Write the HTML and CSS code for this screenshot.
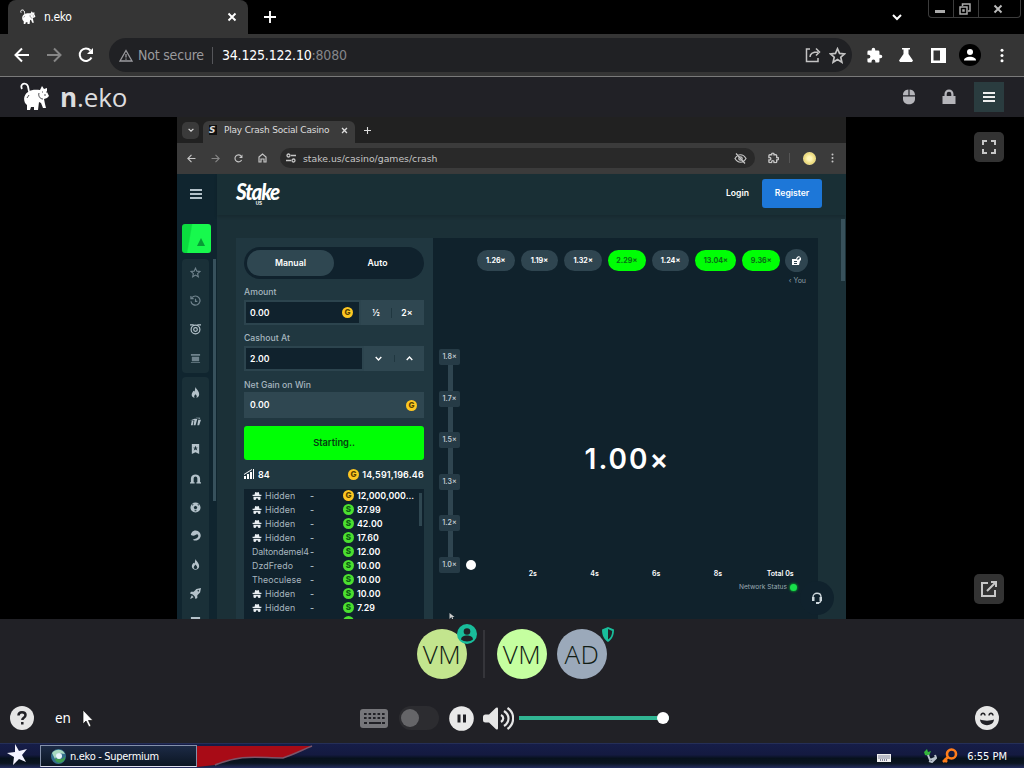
FILE: index.html
```
<!DOCTYPE html>
<html lang="en">
<head>
  <meta charset="utf-8">
  <title>n.eko</title>
  <link rel="stylesheet" href="styles.css">
</head>
<body>
  <svg class="sprite" width="0" height="0">
    <symbol id="cat" viewBox="0 0 30 30">
      <path d="M2 7C0 3 3 1 6 2c4 2 1 6 4 9" fill="none" stroke="currentColor" stroke-width="1.800"/>
      <path d="M8 10c4-3 9-2 12-2l2-4 2 3 3-1 0 4 2 4-2 2-3 1 1 5 1 4h-3l-2-5-2-1-1 8h-4l0-3h-3l-1 3H7l0-5C3 20 3 13 8 10z" fill="currentColor"/>
      <path d="M19 11c-1 3 1 6 4 6M9 13l-2 3M22 10h1M26 10h1M24 13h2" fill="none" stroke="#212126" stroke-width=".8"/>
    </symbol>
    <symbol id="close" viewBox="0 0 10 10"><path d="M1.500 1.500l7 7M8.500 1.500l-7 7" fill="none" stroke="currentColor" stroke-width="1.900"/></symbol>
    <symbol id="plus" viewBox="0 0 12 12"><path d="M6 0v12M0 6h12" stroke="currentColor" stroke-width="1.900"/></symbol>
    <symbol id="chevron" viewBox="0 0 10 10"><path d="M1 3l4 4 4-4" fill="none" stroke="currentColor" stroke-width="2"/></symbol>
    <symbol id="back" viewBox="0 0 16 16"><path d="M15 8H2M8 1.500L1.500 8 8 14.500" fill="none" stroke="currentColor" stroke-width="2"/></symbol>
    <symbol id="reload" viewBox="0 0 16 16"><path d="M13.500 10.500A6.200 6.200 0 1 1 12.500 3.500" fill="none" stroke="currentColor" stroke-width="2"/><path d="M15 1v6H9z" fill="currentColor"/></symbol>
    <symbol id="dots" viewBox="0 0 4 16"><circle cx="2" cy="2.300" r="1.600"/><circle cx="2" cy="8" r="1.600"/><circle cx="2" cy="13.700" r="1.600"/></symbol>
    <symbol id="puzzle" viewBox="0 0 24 24"><path d="M20.500 11H19V7a2 2 0 0 0-2-2h-4V3.500a2.500 2.500 0 0 0-5 0V5H4a2 2 0 0 0-2 2v3.800h1.500a2.700 2.700 0 0 1 0 5.400H2V20a2 2 0 0 0 2 2h3.800v-1.500a2.700 2.700 0 0 1 5.400 0V22H17a2 2 0 0 0 2-2v-4h1.500a2.500 2.500 0 0 0 0-5z"/></symbol>
    <symbol id="star" viewBox="0 0 24 24"><path d="M12 2.500l2.900 6.500 7 .7-5.300 4.700 1.600 7-6.200-3.700-6.200 3.700 1.600-7L2.100 9.700l7-.7z" fill="none" stroke="currentColor" stroke-width="2.400"/></symbol>
    <symbol id="menu" viewBox="0 0 12 12"><path d="M0 2h12M0 6h12M0 10h12" stroke="currentColor" stroke-width="2"/></symbol>
    <symbol id="spy" viewBox="0 0 10 9"><path d="M3 0l2 .5L7 0l.8 3H10v1.400H0V3h2.200zM1 5.300h8v2.200a1.500 1.500 0 0 1-3 0L5.500 7h-1L4 7.500a1.500 1.500 0 0 1-3 0z" fill="#e8eef2"/></symbol>
  </svg>

  <div class="tabstrip">
    <div class="tab">
      <svg class="tab-icon"><use href="#cat"/></svg>
      <span>n.eko</span>
      <svg class="tab-close"><use href="#close"/></svg>
    </div>
    <svg class="new-tab"><use href="#plus"/></svg>
    <svg class="tab-search"><use href="#chevron"/></svg>
    <div class="window-buttons">
      <span class="wb"><svg width="12" height="12"><path d="M1 7h10v3H1z" fill="#aaa"/></svg></span>
      <span class="wb"><svg width="12" height="12" fill="none" stroke="#aaa" stroke-width="1.500"><path d="M3.500 3V1h7.500v7H9"/><path d="M1 4h7v7H1zM4 7h1v1H4z"/></svg></span>
      <span class="wb wide"><svg width="10" height="10"><use href="#close"/></svg></span>
    </div>
  </div>

  <div class="toolbar">
    <svg class="nav"><use href="#back"/></svg>
    <svg class="nav forward"><use href="#back"/></svg>
    <svg class="nav"><use href="#reload"/></svg>
    <div class="omnibox">
      <svg class="warn" viewBox="0 0 14 13"><path d="M7 1.500L13 12H1zM7 5v3.500M7 9.500v1.300" fill="none" stroke="currentColor" stroke-width="1.300"/></svg>
      <span class="not-secure">Not secure</span>
      <span class="sep"></span>
      <span class="url">34.125.122.10<span class="port">:8080</span></span>
      <svg class="share" viewBox="0 0 16 16" fill="none" stroke="currentColor" stroke-width="1.500"><path d="M5 2H1.500v12.500H13V11M5 10c0-4 3-5 8-5M11 1.500L14.500 5 11 8.500"/></svg>
      <svg class="bookmark"><use href="#star"/></svg>
    </div>
    <div class="actions">
      <span><svg width="17" height="17"><use href="#puzzle"/></svg></span>
      <span><svg width="16" height="16" viewBox="0 0 16 16"><path d="M4 1h8v1.500h-1.500V7L15 13.500 14 15H2l-1-1.500L5.500 7V2.500H4z"/></svg></span>
      <span><svg width="15" height="15" viewBox="0 0 15 15"><path fill-rule="evenodd" d="M0 0h15v15H0zM2.500 2.500h6.500v10H2.500z"/></svg></span>
      <span><i class="profile"><svg width="14" height="14" viewBox="0 0 14 14"><circle cx="7" cy="4" r="3"/><path d="M1 12.500c0-5 12-5 12 0z"/></svg></i></span>
      <span><svg width="4" height="15"><use href="#dots"/></svg></span>
    </div>
  </div>

  <div class="neko-header">
    <svg class="neko-logo"><use href="#cat"/></svg>
    <div class="neko-name"><b>n</b>.eko</div>
    <div class="neko-menu">
      <span class="hbtn"><svg width="14" height="16" viewBox="0 0 14 16"><path d="M6.400.5v5.800H1C1 3 3 .8 6.400.5zM7.600.5C11 .8 13 3 13 6.300H7.600zM1 7.500h12V10c0 7-12 7-12 0z"/></svg></span>
      <span class="hbtn"><svg width="14" height="16" viewBox="0 0 14 16"><path fill-rule="evenodd" d="M.5 7h2V5a4.500 4.500 0 0 1 9 0v2h2v8H.5zM4.700 7h4.600V5a2.300 2.300 0 0 0-4.600 0z"/></svg></span>
      <span class="hbtn open"><svg width="12" height="12"><use href="#menu"/></svg></span>
    </div>
  </div>

  <div class="video">
    <div class="stream">
      <div class="s-tabs">
        <span class="s-search"><svg width="6" height="6"><use href="#chevron"/></svg></span>
        <div class="s-tab">
          <span class="s-fav">S</span>
          <span>Play Crash Social Casino</span>
          <svg width="7" height="7"><use href="#close"/></svg>
        </div>
        <svg width="7" height="7"><use href="#plus"/></svg>
      </div>
      <div class="s-toolbar">
        <svg width="9" height="9"><use href="#back"/></svg>
        <svg width="9" height="9" class="forward"><use href="#back"/></svg>
        <svg width="9" height="9"><use href="#reload"/></svg>
        <svg width="9" height="10" viewBox="0 0 9 10" fill="none" stroke="currentColor" stroke-width="1.200"><path d="M1 4l3.500-3L8 4v5H6V6H3v3H1z"/></svg>
        <div class="s-omnibox">
          <svg width="10" height="10" viewBox="0 0 10 10" fill="none" stroke="currentColor" stroke-width="1.300"><circle cx="2.500" cy="2.500" r="1.500"/><path d="M5 2.500h5M0 7.500h5"/><circle cx="7.500" cy="7.500" r="1.500"/></svg>
          <span>stake.us/casino/games/crash</span>
          <svg class="eye" width="13" height="11" viewBox="0 0 13 11" fill="none" stroke="currentColor" stroke-width="1.200"><path d="M1 5.500c3-5 8-5 11 0-3 5-8 5-11 0zM2 .5l9 10"/><circle cx="6.500" cy="5.500" r="1.700"/></svg>
        </div>
        <svg class="s-ext" width="11" height="12" viewBox="0 0 24 24" fill="none" stroke="currentColor" stroke-width="3"><use href="#puzzle"/></svg>
        <span class="s-line"></span>
        <span class="s-avatar"></span>
        <svg width="3" height="10" class="s-dots"><use href="#dots"/></svg>
      </div>

      <div class="stake">
        <div class="side">
          <svg class="burger" width="12" height="12"><use href="#menu"/></svg>
          <div class="promo"><svg width="8" height="8" viewBox="0 0 8 8"><path d="M4 0l4 8H0z" fill="#079b35"/></svg></div>
          <div class="side-body">
            <div class="side-card">
              <svg class="dim"><use href="#star"/></svg>
              <svg class="dim" viewBox="0 0 12 12" fill="none" stroke="currentColor" stroke-width="1.300"><path d="M2 3a5 5 0 1 1-1 4M1 1v3h3M6 4v3h2"/></svg>
              <svg viewBox="0 0 12 12" fill="none" stroke="currentColor" stroke-width="1.300"><circle cx="6" cy="6" r="4.800"/><circle cx="6" cy="6" r="2"/><path d="M0 1h4M8 1h4"/></svg>
              <svg class="dim" viewBox="0 0 12 12"><path d="M1 1h10v2H1zM2 4h8v5H2zM1 10h10v1H1z"/></svg>
            </div>
            <div class="side-card grow">
              <svg viewBox="0 0 12 12"><path d="M6 0c1 3 4 4 4 8 0 2-1 3-3 4 1-2 0-3-1-4-1 1-2 2-1 4-5-2-3-6-1-8l1 1z"/></svg>
              <svg viewBox="0 0 12 12"><path d="M2 5h2L3 10H1zM5 3h3L6 10H4zM9 4h3l-2 6H8zM0 5l5-2v1zM6 2h5v1z"/></svg>
              <svg viewBox="0 0 12 12"><path fill-rule="evenodd" d="M2 0h8v11L6 9l-4 2zM6 2L5 4H3l2 1-1 2 2-1 2 1-1-2 2-1H7z"/></svg>
              <svg viewBox="0 0 12 12"><path d="M1 11V6C1 0 11 0 11 6v5H8V6c0-3-4-3-4 0v5z"/><path d="M0 10h5v1.500H0zM7 10h5v1.500H7z"/></svg>
              <svg viewBox="0 0 12 12"><path fill-rule="evenodd" d="M6 .5a5.500 5.500 0 1 1 0 11 5.500 5.500 0 0 1 0-11zM6 4L4 5.500 5 8h2l1-2.500zM2 3l1 1 1-2zM8 2l1 2 1-1zM5 10h2V9H5z"/></svg>
              <svg viewBox="0 0 12 12"><path fill-rule="evenodd" d="M6 .5a5.500 5.500 0 1 1-3 10l3-1c3-1 4-4 2-5-2 0-3 3-7 1C1 3 3 .5 6 .5z"/></svg>
              <svg viewBox="0 0 12 12"><path fill-rule="evenodd" d="M6 0c1 3 4 4 4 8 0 5-8 5-8 0 0-2 1-3 2-4l1 1zM6 6c-3 3-2 5 0 5s3-2 0-5z"/></svg>
              <svg viewBox="0 0 12 12"><path fill-rule="evenodd" d="M12 0L11 5 8 8v3l-2 1-1-3-2-2-3-1 1-2h3l3-3zM8 3l1 1 1-1-1-1zM2 8l2 2-4 2z"/></svg>
              <svg viewBox="0 0 12 12"><path d="M1 0h10v8H1z"/></svg>
            </div>
          </div>
        </div>

        <div class="site">
          <div class="site-header">
            <div class="logo"><span>Stake</span><small>US</small></div>
            <span class="login">Login</span>
            <span class="register">Register</span>
          </div>
          <div class="game">
            <div class="bet">
              <div class="mode"><span class="on">Manual</span><span>Auto</span></div>
              <label>Amount</label>
              <div class="field">
                <div class="value">0.00<i class="coin">G</i></div>
                <div class="pair amount"><span>½</span><span>2×</span></div>
              </div>
              <label class="l2">Cashout At</label>
              <div class="field">
                <div class="value">2.00</div>
                <div class="pair"><span><svg width="7" height="7"><use href="#chevron"/></svg></span><span><svg class="up" width="7" height="7"><use href="#chevron"/></svg></span></div>
              </div>
              <label class="l3">Net Gain on Win</label>
              <div class="gain">0.00<i class="coin">G</i></div>
              <div class="start">Starting..</div>
              <div class="totals">
                <svg width="10" height="10" viewBox="0 0 10 10" fill="#b1bad3"><path d="M0 7h2v3H0zM3 5h2v5H3zM6 3h2v7H6zM9 0h1v10H9zM0 5l8-5v1L0 6z"/></svg>
                <span>84</span>
                <span class="sum"><i class="coin">G</i>14,591,196.46</span>
              </div>
              <div class="players">
                <div class="p"><span><svg><use href="#spy"/></svg>Hidden</span><em>-</em><b><i class="coin">G</i>12,000,000...</b></div>
                <div class="p"><span><svg><use href="#spy"/></svg>Hidden</span><em>-</em><b><i class="coin s">S</i>87.99</b></div>
                <div class="p"><span><svg><use href="#spy"/></svg>Hidden</span><em>-</em><b><i class="coin s">S</i>42.00</b></div>
                <div class="p"><span><svg><use href="#spy"/></svg>Hidden</span><em>-</em><b><i class="coin s">S</i>17.60</b></div>
                <div class="p"><span class="long">Daltondemel4</span><em>-</em><b><i class="coin s">S</i>12.00</b></div>
                <div class="p"><span>DzdFredo</span><em>-</em><b><i class="coin s">S</i>10.00</b></div>
                <div class="p"><span>Theoculese</span><em>-</em><b><i class="coin s">S</i>10.00</b></div>
                <div class="p"><span><svg><use href="#spy"/></svg>Hidden</span><em>-</em><b><i class="coin s">S</i>10.00</b></div>
                <div class="p"><span><svg><use href="#spy"/></svg>Hidden</span><em>-</em><b><i class="coin s">S</i>7.29</b></div>
                <div class="p"><span></span><em></em><b><i class="coin s"></i></b></div>
              </div>
            </div>

            <div class="crash">
              <div class="past">
                <span>1.26×</span><span>1.19×</span><span>1.32×</span><span class="win">2.29×</span><span>1.24×</span><span class="win w41">13.04×</span><span class="win">9.36×</span>
                <span class="stats"><svg width="9" height="9" viewBox="0 0 9 9"><path fill-rule="evenodd" d="M0 3h4l1-2 2-1 2 2v2L8 5 7 9H0zM5 3l1 1 2-2-1-1zM2 5v1h3V5zM2 7v1h3V7z" fill="#fff"/></svg></span>
              </div>
              <div class="you">‹ You</div>
              <div class="chart">
                <div class="y-axis"><span>1.8×</span><span>1.7×</span><span>1.5×</span><span>1.3×</span><span>1.2×</span><span>1.0×</span></div>
                <div class="ball"></div>
                <div class="multiplier">1.00×</div>
              </div>
              <div class="x-axis"><span>2s</span><span>4s</span><span>6s</span><span>8s</span><span class="total">Total 0s</span></div>
              <div class="network">Network Status<i></i></div>
            </div>
          </div>
          <div class="support"><svg width="12" height="13" viewBox="0 0 12 13"><path d="M2 8V5c0-5 8-5 8 0v3c0 2-1 3-4 3" fill="none" stroke="#cdd7dc" stroke-width="1.300"/><path d="M1 5h2.500v4H1zM8.500 5H11v4H8.500zM5 10h3v2H5z" fill="#cdd7dc"/></svg></div>
        </div>
      </div>
      <div class="page-scroll"></div>
      <svg class="remote-cursor" width="6" height="8" viewBox="0 0 6 8"><path d="M.5 0v6l2-2 1 4 1-1-1-3h2z" fill="#ccc"/></svg>
    </div>

    <div class="video-buttons">
      <span class="vbtn"><svg width="16" height="16" viewBox="0 0 16 16" fill="none" stroke="#c8c8c8" stroke-width="2"><path d="M2 6V2h4M10 2h4v4M14 10v4h-4M6 14H2v-4"/></svg></span>
      <span class="vbtn"><svg width="18" height="18" viewBox="0 0 18 18" fill="none" stroke="#c8c8c8" stroke-width="2"><path d="M8 3H2v13h13v-6M7 11l9-9M11 2h5v5"/></svg></span>
    </div>
  </div>

  <div class="members">
    <div class="member host">VM<span class="badge"><svg width="20" height="20" viewBox="0 0 20 20"><circle cx="10" cy="10" r="10" fill="#19bd9b"/><circle cx="10" cy="7.500" r="3.300" fill="#212126"/><path d="M4 15.500c0-5.500 12-5.500 12 0-3 2.500-9 2.500-12 0z" fill="#212126"/></svg></span></div>
    <span class="divider"></span>
    <div class="member">VM</div>
    <div class="member admin">AD<span class="shield"><svg width="14" height="15" viewBox="0 0 14 15"><path fill-rule="evenodd" d="M7 0l6 2.500c0 6-2 10-6 12.500-4-2.500-6-6.500-6-12.500zM7 2v10.500c3-2 4-4.500 4.200-8.500z" fill="#19bd9b"/></svg></span></div>
  </div>

  <div class="controls">
    <div class="left">
      <svg width="24" height="24" viewBox="0 0 24 24"><circle cx="12" cy="12" r="12" fill="#e6e6e6"/><path d="M8.500 9.500c0-4.500 7-4 7-.5 0 3-3.200 2.500-3.200 5M12.300 16v2.500" fill="none" stroke="#212126" stroke-width="2.500"/></svg>
      <span class="lang">en</span>
      <svg class="cursor" width="12" height="19" viewBox="0 0 12 19"><path d="M1 1v14l3-3 3 6 2-1-2.500-5.500H11z" fill="#fff" stroke="#111" stroke-width=".7"/></svg>
    </div>
    <div class="center">
      <svg class="keyboard" width="28" height="19" viewBox="0 0 28 19"><rect width="28" height="19" rx="3" fill="#76767a"/><path d="M4 5h21M4 9h21" stroke="#212126" stroke-width="2.200" stroke-dasharray="2.600 1.900"/><path d="M4 14h3M9 14h12M22 14h3" stroke="#212126" stroke-width="2.200"/></svg>
      <span class="switch"></span>
      <svg class="pause" width="25" height="25" viewBox="0 0 25 25"><circle cx="12.500" cy="12.500" r="12.300" fill="#e9e9e9"/><path d="M8.500 8.500h3v8h-3zM14 8.500h3v8h-3z" fill="#212126"/></svg>
      <svg class="volume" width="31" height="23" viewBox="0 0 31 23"><path d="M0 10q0-2.500 2.500-2.500H6L13 .8q2-1 2 1v19.400q0 2-2 1L6 15.500H2.500Q0 15.500 0 13z" fill="#e6e6e6"/><path d="M18 8c3 1.500 3 5 0 7M21 4c6 4 6 11 0 15M24.500 1c7.500 5 7.500 15.500 0 21" fill="none" stroke="#e6e6e6" stroke-width="2.200"/></svg>
      <div class="slider"><span class="knob"></span></div>
    </div>
    <svg class="emoji" width="24" height="24" viewBox="0 0 24 24"><circle cx="12" cy="12" r="12" fill="#e6e6e6"/><path d="M6 9.500c.5-3 3.500-3 4 0M14 9.500c.5-3 3.500-3 4 0" fill="none" stroke="#212126" stroke-width="1.500"/><path d="M5 13.500c4 1.500 10 1.500 14 0-.5 7.500-13.500 7.500-14 0z" fill="#212126"/></svg>
  </div>

  <div class="taskbar">
    <svg class="startmenu" width="21" height="22" viewBox="0 0 21 22"><path d="M8 0l4 7 8-2-5 6 4 7-7-3-6 6 1-8-7-4 8-1z" fill="#f4f4ff"/></svg>
    <div class="task">
      <svg width="15" height="15" viewBox="0 0 15 15"><circle cx="7.500" cy="7.500" r="7.500" fill="#356f8d"/><path d="M1 4c4-5 11-4 13 1L7 4l-3 6z" fill="#a9d9c0"/><path d="M4 10c0 4 7 6 10 0V7c-1 3-4 4-7 2z" fill="#3f9d50"/><circle cx="8" cy="7" r="3" fill="#e8f4fa"/></svg>
      <span>n.eko - Supermium</span>
    </div>
    <svg class="ribbon" width="120" height="22" viewBox="0 0 120 22"><path d="M0 1h115C105 5 98 9 86 13 60 13 45 9 18 20L0 22z" fill="#a80b16"/><path d="M115 1C105 5 98 9 86 13 60 13 45 9 18 20" fill="none" stroke="#7c5468" stroke-width="1.500"/></svg>
    <div class="tray">
      <svg class="kb" width="14" height="8" viewBox="0 0 14 8"><path d="M0 0h14v8H0z" fill="#f0f0f0"/><path d="M1.500 2h11M1.500 4h11M3 6h8" stroke="#1a2048" stroke-dasharray="1 1"/></svg>
      <svg class="usb" width="14" height="14" viewBox="0 0 14 14"><path d="M1 3l3-3 1 3 3-1-2 5-4-1z" fill="#35b53c"/><path d="M5 6l2 5 5-2M12 6l1 3-4 4-3-1" fill="none" stroke="#b9c2cc" stroke-width="2"/></svg>
      <svg class="find" width="16" height="16" viewBox="0 0 16 16" fill="none" stroke="#ff7d1a"><circle cx="9.500" cy="6" r="4.500" stroke-width="2.600"/><path d="M6 9l-5 5M2 11l3 3" stroke-width="2.600"/></svg>
      <span>6:55 PM</span>
    </div>
  </div>
</body>
</html>
```
FILE: styles.css
```
* {
  box-sizing: border-box;
}

body {
  margin: 0;
  width: 1024px;
  height: 768px;
  overflow: hidden;
  display: flex;
  flex-direction: column;
  background: #212126;
  color: #fff;
  font-family: "DejaVu Sans Condensed", "DejaVu Sans", sans-serif;
  font-stretch: condensed;
}

svg {
  display: block;
  flex: none;
  fill: currentColor;
}

svg[fill="none"] {
  fill: none;
}

.sprite {
  position: absolute;
}

/* outer browser */
.tabstrip {
  height: 34px;
  flex: none;
  display: flex;
  background: #000;
  padding-left: 8px;
}

.tab {
  width: 240px;
  display: flex;
  align-items: center;
  padding: 0 11px 0 12px;
  background: #353535;
  border-radius: 8px 8px 0 0;
  font-size: 12px;
  letter-spacing: -.4px;
}

.tab-icon {
  width: 16px;
  height: 16px;
  margin-right: 8px;
}

.tab-close {
  width: 10px;
  height: 10px;
  margin-left: auto;
}

.new-tab {
  width: 12px;
  height: 12px;
  margin: 11px 0 0 16px;
}

.tab-search {
  width: 10px;
  height: 10px;
  margin: 12px 26px 0 auto;
}

.window-buttons {
  display: flex;
  width: 93px;
  height: 18px;
  margin-right: 3px;
  border: 1px solid #3c3c3c;
  border-top: none;
  border-radius: 0 0 4px 4px;
  color: #bbb;
}

.wb {
  width: 25px;
  display: flex;
  align-items: center;
  justify-content: center;
  padding-right: 3px;
  border-right: 1px solid #3c3c3c;
}

.wb.wide {
  flex: 1;
  border: none;
}

.toolbar {
  height: 43px;
  flex: none;
  display: flex;
  align-items: center;
  padding-left: 14px;
  background: #353535;
  border-bottom: 1px solid #7a7a7a;
}

.nav {
  width: 16px;
  height: 16px;
  margin-right: 16px;
}

.forward {
  transform: scaleX(-1);
  color: #868686;
}

.omnibox {
  width: 743px;
  height: 34px;
  margin-left: -1px;
  display: flex;
  align-items: center;
  padding: 0 6px 0 10px;
  border-radius: 17px;
  background: #202124;
  color: #9a9a9e;
  font-size: 14px;
}

.warn {
  width: 14px;
  height: 13px;
  margin-right: 5px;
}

.not-secure {
  width: 66px;
  white-space: nowrap;
  letter-spacing: -.2px;
}

.sep {
  width: 1px;
  height: 17px;
  margin: 0 9px 0 8px;
  background: #55565a;
}

.url {
  color: #fff;
  letter-spacing: -.2px;
}

.port {
  color: #85868a;
}

.share {
  width: 16px;
  height: 16px;
  margin-left: auto;
  margin-right: 8px;
}

.bookmark {
  width: 17px;
  height: 17px;
}

.omnibox .share, .omnibox .bookmark {
  color: #c4c4c4;
}

.actions {
  display: flex;
  padding-left: 6px;
}

.actions span {
  width: 32px;
  height: 22px;
  display: flex;
  align-items: center;
  justify-content: center;
}

.profile {
  width: 22px;
  height: 22px;
  display: flex;
  align-items: center;
  justify-content: center;
  border-radius: 50%;
  background: #000;
}

/* n.eko header */
.neko-header {
  height: 40px;
  flex: none;
  display: flex;
  align-items: center;
  padding: 0 20px;
  color: #dcdcde;
}

.neko-logo {
  width: 30px;
  height: 30px;
  color: #fff;
}

.neko-name {
  margin-left: 10px;
  font: 26px/30px "Open Sans", "Noto Sans", sans-serif;
  letter-spacing: -.1px;
}

.neko-menu {
  display: flex;
  gap: 10px;
  margin-left: auto;
  color: #b5b5ba;
}

.hbtn {
  width: 30px;
  height: 30px;
  display: flex;
  align-items: center;
  justify-content: center;
}

.hbtn.open {
  background: #2a3c3f;
  color: #eee;
}

/* video area */
.video {
  height: 502px;
  flex: none;
  display: flex;
  justify-content: space-between;
  padding: 0 20px 0 177px;
  background: #000;
}

.stream {
  position: relative;
  width: 669px;
  height: 502px;
  display: flex;
  flex-direction: column;
  overflow: hidden;
  background: #1b3037;
  font-family: "DejaVu Sans", sans-serif;
  font-stretch: normal;
}

.s-tabs {
  height: 26px;
  flex: none;
  display: flex;
  align-items: center;
  padding-left: 5px;
  background: #212121;
  color: #ddd;
  font-size: 9px;
}

.s-search {
  width: 17px;
  height: 17px;
  display: flex;
  align-items: center;
  justify-content: center;
  border-radius: 5px;
  background: #3a3a3a;
}

.s-tab {
  width: 152px;
  height: 22px;
  display: flex;
  align-items: center;
  margin: 4px 9px 0 4px;
  padding: 0 7px 4px 6px;
  border-radius: 6px 6px 0 0;
  background: #3b3b3b;
  white-space: nowrap;
  letter-spacing: -.2px;
}

.s-tab svg {
  margin-left: auto;
}

.s-fav {
  width: 8px;
  margin-right: 7px;
  background: #111;
  font-weight: bold;
  font-style: italic;
}

.s-toolbar {
  height: 31px;
  flex: none;
  display: flex;
  align-items: center;
  gap: 14.500px;
  padding: 0 0 1px 10px;
  background: #3b3b3b;
  color: #c6c6c6;
  font-size: 9.300px;
}

.s-omnibox {
  width: 475px;
  height: 20px;
  display: flex;
  align-items: center;
  gap: 7px;
  margin-left: -1px;
  padding: 0 8px 0 6px;
  border-radius: 10px;
  background: #292929;
}

.eye {
  margin-left: auto;
}

.s-ext {
  margin-left: -2px;
}

.s-line {
  width: 1px;
  height: 10px;
  margin-left: -4px;
  background: #555;
}

.s-avatar {
  width: 13px;
  height: 13px;
  margin-left: -2px;
  border-radius: 50%;
  background: radial-gradient(#fff6b8 20%, #ead879 60%, #fff);
}

.s-dots {
  margin-left: 1px;
}

.stake {
  flex: 1;
  display: flex;
  min-height: 0;
  font-family: Inter, "Noto Sans", sans-serif;
}

/* stake sidebar */
.side {
  width: 40px;
  padding-left: 5px;
  background: #10252f;
  color: #b4c2ca;
}

.burger {
  margin: 14px 0 24px 8px;
}

.promo {
  width: 29px;
  height: 29px;
  padding: 14px 0 0 15px;
  border-radius: 3px;
  background: linear-gradient(100deg, #0bdc3f 28%, #17f94d 32%);
}

.side-body {
  width: 34px;
  height: 367px;
  margin-top: 6px;
  border-right: 3px solid transparent;
  border-image: linear-gradient(#37515c 0 242px, transparent 242px) 1;
  border-width: 0 3px 0 0;
}

.side-card {
  width: 27px;
  height: 114px;
  padding: 7.500px 0 0 8px;
  border-radius: 4px;
  background: #1a3038;
}

.side-card svg {
  width: 11px;
  height: 11px;
  margin-bottom: 17.700px;
}

.side-card.grow {
  height: 249px;
  margin-top: 4px;
  padding-top: 10px;
}

.side .dim {
  color: #6f828c;
}

/* stake page */
.site {
  flex: 1;
  position: relative;
}

.site-header {
  height: 41px;
  display: flex;
  align-items: center;
  padding: 0 24px 3px 19px;
  background: #192f35;
  box-shadow: 0 2px 3px rgba(0, 0, 0, .15);
  font-size: 8.600px;
  font-weight: 600;
}

.logo {
  display: flex;
  flex-direction: column;
  font: italic 900 23px/22px Lato, sans-serif;
  letter-spacing: -1.300px;
  transform: scaleX(.9);
  transform-origin: left;
}

.logo small {
  margin: -1px 0 0 22px;
  font: 700 5px/5px "Liberation Sans", sans-serif;
  letter-spacing: 0;
}

.login {
  margin-left: auto;
}

.register {
  width: 60px;
  margin-left: 13px;
  line-height: 29px;
  text-align: center;
  border-radius: 3px;
  background: #1d77d8;
}

.game {
  display: flex;
  width: 582px;
  height: 382px;
  margin: 23px 0 0 19px;
  background: #10222c;
}

.bet {
  width: 197px;
  padding: 9px 9px 0 8px;
  background: #203740;
  color: #fff;
  font-size: 8.700px;
  font-weight: 600;
}

.mode {
  display: flex;
  height: 32px;
  padding: 3px;
  border-radius: 16px;
  background: #10222d;
}

.mode span {
  flex: 1;
  line-height: 26px;
  text-align: center;
  border-radius: 13px;
}

.mode .on {
  background: #2f4751;
}

.bet label {
  display: block;
  height: 21px;
  padding-top: 7px;
  line-height: 12px;
  font-weight: 500;
  color: #a7b6bf;
}

.bet .l3 {
  padding-top: 8px;
}

.field {
  display: flex;
  height: 25px;
  background: #2f4751;
}

.value {
  flex: 1;
  display: flex;
  align-items: center;
  justify-content: space-between;
  padding: 0 6px 0 4px;
  border: 2px solid #2c444e;
  background: #10222d;
}

.pair {
  width: 60px;
  display: flex;
  align-items: center;
}

.pair.amount {
  width: 63px;
  padding-right: 2px;
}

.pair span {
  flex: 1;
  display: flex;
  justify-content: center;
}

.pair span + span {
  border-left: 1px solid #203740;
}

.up {
  transform: scaleY(-1);
}

.coin {
  width: 11px;
  height: 11px;
  flex: none;
  display: inline-block;
  border-radius: 50%;
  background: #fdc722;
  color: #5a4200;
  font-size: 8px;
  font-weight: 800;
  font-style: normal;
  line-height: 11px;
  text-align: center;
}

.coin.s {
  background: #4be030;
  color: #0b5c10;
}

.gain {
  display: flex;
  align-items: center;
  justify-content: space-between;
  height: 26px;
  padding: 0 7px 0 6px;
  background: #2f4751;
}

.start {
  height: 34px;
  margin-top: 8px;
  border-radius: 3px;
  background: #00ff05;
  color: #063c12;
  font-size: 9.300px;
  line-height: 33px;
  text-align: center;
}

.totals {
  height: 29px;
  display: flex;
  align-items: center;
  gap: 4px;
  padding-bottom: 1px;
  font-size: 9px;
}

.sum {
  display: flex;
  align-items: center;
  gap: 3px;
  margin-left: auto;
  letter-spacing: .2px;
}

.players {
  height: 131px;
  overflow: hidden;
  background: #10222d linear-gradient(#2f4751, #2f4751) 175px 4px / 3px 33px no-repeat;
}

.p {
  height: 14px;
  display: flex;
  align-items: center;
  padding: 0 0 1px 8px;
  font-size: 8.800px;
}

.p span {
  width: 58px;
  display: flex;
  align-items: center;
  font-weight: 400;
  color: #a7b6bf;
  letter-spacing: .1px;
}

.p .long {
  letter-spacing: -.1px;
}

.p svg {
  width: 10px;
  height: 8px;
  margin-right: 3px;
}

.p em {
  width: 33px;
  color: #a7b6bf;
  font-style: normal;
}

.p b {
  display: flex;
  align-items: center;
  gap: 3px;
  font-weight: 600;
}

/* crash chart */
.crash {
  flex: 1;
  display: flex;
  flex-direction: column;
  padding: 12px 10px 0 6px;
}

.past {
  display: flex;
  gap: 6px;
  justify-content: flex-end;
  font-size: 7.200px;
  font-weight: 700;
}

.past span {
  width: 37.700px;
  height: 21px;
  line-height: 21px;
  text-align: center;
  border-radius: 11px;
  background: #2f4550;
}

.past .win {
  background: #00ff05;
  color: #0b6a17;
}

.past .w41 {
  width: 41px;
}

.past .stats {
  width: 23px;
  height: 23px;
  margin: -1px 0 -1px -1px;
  display: flex;
  align-items: center;
  justify-content: center;
  border-radius: 50%;
}

.you {
  height: 20px;
  padding: 5px 2px 0 0;
  font-size: 7px;
  text-align: right;
  color: #8c9da7;
}

.chart {
  flex: none;
  display: flex;
  height: 224px;
  margin-top: 58px;
}

.y-axis {
  width: 21px;
  display: flex;
  flex-direction: column;
  justify-content: space-between;
  background: linear-gradient(#2f4550, #2f4550) 9px 0 / 5px 100% no-repeat;
  color: #c0cad0;
  font-size: 7px;
  font-weight: 600;
}

.y-axis span {
  height: 16px;
  line-height: 16px;
  text-align: center;
  border-radius: 2px;
  background: #263b46;
}

.ball {
  width: 10px;
  height: 10px;
  margin: auto 0 3px 6px;
  border-radius: 50%;
  background: #fff;
}

.multiplier {
  width: 303px;
  margin-top: 93px;
  font-size: 28px;
  font-weight: 600;
  line-height: 34px;
  text-align: center;
  letter-spacing: 2px;
}

.x-axis {
  display: flex;
  padding-left: 63px;
  line-height: 10px;
  font-size: 7px;
  font-weight: 600;
  margin-top: -4px;
}

.x-axis span {
  width: 61.700px;
  text-align: center;
}

.x-axis .total {
  width: auto;
  margin-left: 18px;
  white-space: nowrap;
}

.network {
  display: flex;
  align-items: center;
  justify-content: flex-end;
  gap: 3px;
  margin-top: 3px;
  padding-right: 11px;
  font-size: 6.600px;
  line-height: 10px;
  color: #9baab3;
}

.network i {
  width: 7px;
  height: 7px;
  border-radius: 50%;
  background: #18e04b;
  box-shadow: 0 0 2px 1px #0b7a2c;
}

.support {
  position: absolute;
  right: 12px;
  bottom: 4px;
  width: 34px;
  height: 34px;
  display: flex;
  align-items: center;
  justify-content: center;
  border-radius: 50%;
  background: #10222d;
}

.page-scroll {
  position: absolute;
  right: 1px;
  top: 102px;
  width: 4px;
  height: 62px;
  background: #38515b;
}

.remote-cursor {
  position: absolute;
  left: 272px;
  top: 496px;
}

.video-buttons {
  display: flex;
  flex-direction: column;
  justify-content: space-between;
  padding: 15px 0;
}

.vbtn {
  width: 30px;
  height: 30px;
  display: flex;
  align-items: center;
  justify-content: center;
  border-radius: 5px;
  background: #333;
}

/* members */
.members {
  height: 70px;
  flex: none;
  display: flex;
  align-items: center;
  justify-content: center;
  gap: 10px;
}

.member {
  position: relative;
  width: 50px;
  height: 50px;
  border-radius: 50%;
  background: #c5ffa0;
  color: #111c14;
  font: 300 26px/51px "Open Sans", "Noto Sans", sans-serif;
  text-align: center;
  letter-spacing: .5px;
}

.member.host {
  background: #c3e58e;
}

.member.admin {
  background: #9ba9ba;
}

.badge {
  position: absolute;
  right: -10px;
  top: -5px;
}

.shield {
  position: absolute;
  right: -8px;
  top: -2px;
}

.divider {
  width: 2px;
  height: 48px;
  margin: 0 2px 0 6px;
  background: #35353a;
}

/* controls */
.controls {
  height: 54px;
  flex: none;
  display: flex;
  align-items: center;
  justify-content: space-between;
  padding: 4px 25px 0 10px;
}

.left {
  display: flex;
  align-items: center;
  width: 350px;
}

.lang {
  margin-left: 21px;
  font: 13.500px "Noto Sans", sans-serif;
}

.cursor {
  margin-left: 11px;
}

.center {
  flex: 1;
  display: flex;
  align-items: center;
}

.switch {
  width: 40px;
  height: 24px;
  margin: 0 10px 0 11px;
  padding: 3px 2px;
  border-radius: 12px;
  background: #2c2c30;
}

.switch::before {
  content: "";
  display: block;
  width: 18px;
  height: 18px;
  border-radius: 50%;
  background: #656568;
}

.volume {
  margin: 0 5px 0 9px;
}

.slider {
  width: 150px;
  height: 4px;
  display: flex;
  align-items: center;
  justify-content: flex-end;
  background: #31b593;
}

.knob {
  width: 12px;
  height: 12px;
  border-radius: 50%;
  background: #fff;
}

/* taskbar */
.taskbar {
  height: 25px;
  flex: none;
  display: flex;
  align-items: center;
  border-top: 1px solid #252f58;
  background: linear-gradient(#161d48, #141a40 45%, #07111c 60%, #0b1520 80%, #252e61);
  font-size: 11px;
}

.startmenu {
  margin: -3px 0 0 7px;
}

.task {
  width: 157px;
  height: 22px;
  display: flex;
  align-items: center;
  gap: 4px;
  margin-left: 12px;
  padding-left: 10px;
  border: 1px solid #8490a8;
  border-bottom-color: #dde;
  background: linear-gradient(#1c2a45, #0c1623);
  white-space: nowrap;
  letter-spacing: -.3px;
}

.tray {
  display: flex;
  align-items: center;
  margin-left: auto;
  padding-right: 17px;
}

.kb {
  margin: 3px 32px 0 0;
}

.find {
  margin: 0 9px 0 5px;
}
```
